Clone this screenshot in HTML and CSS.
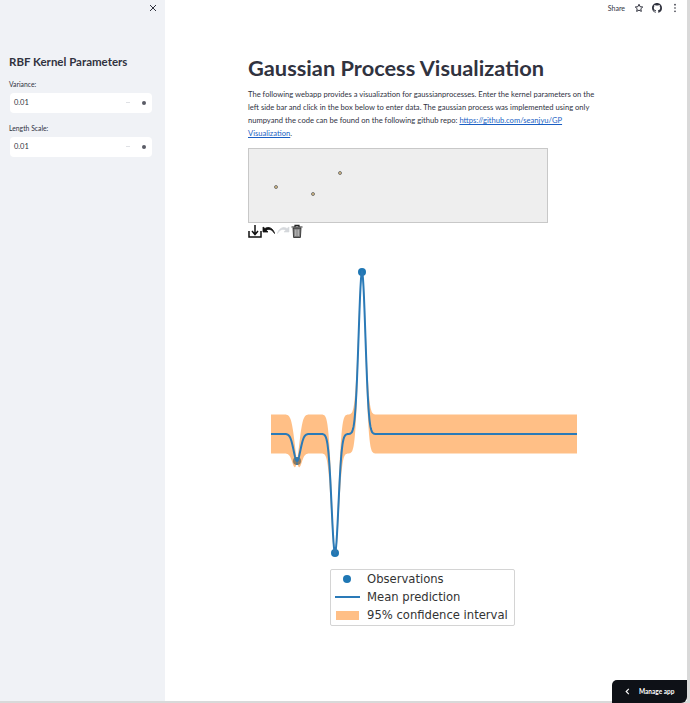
FILE: index.html
```html
<!DOCTYPE html>
<html lang="en">
<head>
    <meta charset="UTF-8">
    <meta name="viewport" content="width=device-width, initial-scale=1.0">
    <title>Gaussian Process Visualization</title>
    <link rel="stylesheet" href="styles.css">
</head>
<body>
    <div class="app">
        <aside class="sidebar">
            <div class="sidebar-top">
                <svg class="close-icon" viewBox="0 0 8 8" width="8" height="8"><path d="M1 1L7 7M7 1L1 7" stroke="#31333f" stroke-width="1" fill="none"/></svg>
            </div>
            <h2 class="sidebar-title">RBF Kernel Parameters</h2>
            <label class="field-label">Variance:</label>
            <div class="num-input">
                <span class="num-value">0.01</span>
                <span class="num-minus"></span>
                <span class="num-plus"></span>
            </div>
            <label class="field-label">Length Scale:</label>
            <div class="num-input">
                <span class="num-value">0.01</span>
                <span class="num-minus"></span>
                <span class="num-plus"></span>
            </div>
        </aside>

        <main class="main">
            <header class="topbar">
                <span class="share">Share</span>
                <svg viewBox="0 0 24 24" width="10" height="10"><path d="M12 3l2.7 5.9 6.3.7-4.7 4.3 1.3 6.3L12 17.1 6.400 20.200l1.300-6.300L3 9.600l6.300-.7z" fill="none" stroke="#31333f" stroke-width="2.400"/></svg>
                <svg viewBox="0 0 16 16" width="10" height="10"><path fill="#31333f" d="M8 0C3.580 0 0 3.580 0 8c0 3.540 2.290 6.530 5.470 7.590.4.070.55-.17.55-.38 0-.19-.01-.82-.01-1.490-2.010.37-2.530-.49-2.690-.94-.09-.23-.48-.94-.82-1.130-.28-.15-.68-.52-.01-.53.63-.01 1.080.58 1.230.82.72 1.210 1.870.87 2.330.66.070-.52.28-.87.51-1.070-1.780-.2-3.640-.89-3.640-3.950 0-.87.31-1.590.82-2.150-.08-.2-.36-1.020.08-2.120 0 0 .67-.21 2.200.82.64-.18 1.320-.27 2-.27s1.360.09 2 .27c1.530-1.040 2.200-.82 2.200-.82.44 1.100.16 1.920.08 2.120.51.56.82 1.270.82 2.150 0 3.070-1.870 3.750-3.650 3.950.29.25.54.73.54 1.480 0 1.070-.01 1.930-.01 2.200 0 .21.15.46.55.38A8.010 8.010 0 0 0 16 8c0-4.420-3.580-8-8-8z"/></svg>
                <svg class="menu-dots" viewBox="0 0 4 12" width="4" height="10"><circle cx="2" cy="2" r="1" fill="#31333f"/><circle cx="2" cy="6" r="1" fill="#31333f"/><circle cx="2" cy="10" r="1" fill="#31333f"/></svg>
            </header>

            <section class="content">
                <h1 class="page-title">Gaussian Process Visualization</h1>
                <p class="intro">The following webapp provides a visualization for gaussianprocesses. Enter the kernel parameters on the<br>
                left side bar and click in the box below to enter data. The gaussian process was implemented using only<br>
                numpyand the code can be found on the following github repo: <a href="#">https://github.com/seanjyu/GP</a><br>
                <a href="#">Visualization</a>.</p>

                <div class="canvas-box">
                    <span class="canvas-dot dot-a"></span>
                    <span class="canvas-dot dot-b"></span>
                    <span class="canvas-dot dot-c"></span>
                </div>
                <div class="canvas-tools">
                    <svg viewBox="0 0 14 14" width="14" height="14"><path d="M1 7v6h12V7M7 1v9M4 7l3 3.500L10 7" fill="none" stroke="#111" stroke-width="1.500"/></svg>
                    <svg viewBox="0 0 14 14" width="14" height="14"><path d="M1 3v5h5L4.200 6.200C7 4.500 10.500 5.500 12.500 9.500 11.500 4.500 6.500 1.800 3 4.500z" fill="#111" stroke="#111" stroke-width=".8"/></svg>
                    <svg viewBox="0 0 14 14" width="14" height="14"><path d="M13 3v5H8l1.800-1.800C7 4.500 3.500 5.500 1.500 9.500 2.500 4.500 7.500 1.800 11 4.500z" fill="#d5d8dc" stroke="#d5d8dc" stroke-width=".6"/></svg>
                    <svg viewBox="0 0 14 14" width="14" height="14"><path d="M1.500 3h11M5 3V1.300h4V3" fill="none" stroke="#222" stroke-width="1.200"/><path d="M3 4h8l-.6 9.500H3.600z" fill="#777" stroke="#222" stroke-width=".8"/><path d="M5.300 5.500v6.500M7 5.500v6.500M8.700 5.500v6.500" stroke="#ddd" stroke-width=".7"/></svg>
                </div>

                <div class="plot">
                    <svg viewBox="0 0 350 390" width="350" height="390">
                        <g id="obs" fill="#1f77b4"></g>
                        <path id="band" fill="#ff7f0e" fill-opacity="0.5"/>
                        <path id="mean" fill="none" stroke="#2a7ab8" stroke-width="2"/>
                    </svg>
                    <div class="legend">
                        <div class="legend-row"><span class="legend-key"><span class="legend-dot"></span></span>Observations</div>
                        <div class="legend-row"><span class="legend-key"><span class="legend-line"></span></span>Mean prediction</div>
                        <div class="legend-row"><span class="legend-key"><span class="legend-patch"></span></span>95% confidence interval</div>
                    </div>
                </div>
            </section>
        </main>
    </div>

    <button class="manage-app">
        <svg viewBox="0 0 8 8" width="7" height="7"><path d="M5.500 1L2.500 4l3 3" fill="none" stroke="#fff" stroke-width="1.300"/></svg>
        <span>Manage app</span>
    </button>

    <script src="plot.js"></script>
</body>
</html>
```

FILE: styles.css
```css
* {
    box-sizing: border-box;
}
html, body {
    margin: 0;
    height: 100%;
    overflow: hidden;
}
body {
    font-family: Lato, "Noto Sans", sans-serif;
    color: #31333f;
    background-color: #d9d9d9;
    width: 690px;
    height: 703px;
    position: relative;
}
.app {
    display: flex;
    width: 687px;
    height: 701px;
}

/* sidebar */
.sidebar {
    width: 165px;
    background-color: #f0f2f6;
    padding: 0 13px 0 10px;
}
.sidebar-top {
    height: 54px;
    display: flex;
    justify-content: flex-end;
    padding: 4px 0 0;
    margin-right: -5px;
}
.close-icon {
    display: block;
}
.sidebar-title {
    margin: 0 0 10px -1px;
    font-size: 11.500px;
    line-height: 15px;
    font-weight: 700;
}
.field-label {
    display: block;
    font-size: 6.800px;
    line-height: 10px;
    margin: 0 0 3.500px -1px;
}
.num-input {
    display: flex;
    align-items: center;
    height: 20px;
    background-color: #fff;
    border-radius: 4px;
    padding: 0 6px 0 4px;
    margin-bottom: 10.500px;
    font-size: 7.500px;
}
.num-value {
    flex: 1;
}
.num-minus {
    width: 4px;
    height: 1px;
    background-color: #dfe1e5;
    margin-right: 12px;
}
.num-plus {
    width: 4px;
    height: 4px;
    border-radius: 50%;
    background-color: #5a5c66;
}

/* main area */
.main {
    flex: 1;
    background-color: #fff;
}
.topbar {
    height: 15px;
    display: flex;
    justify-content: flex-end;
    align-items: center;
    gap: 8px;
    padding-right: 10px;
}
.share {
    font-size: 7px;
    margin-right: 1px;
}
.menu-dots {
    margin-left: 3px;
}
.content {
    width: 350px;
    margin-left: 83px;
    padding-top: 38px;
}
.page-title {
    margin: 0;
    font-size: 21.800px;
    line-height: 30px;
    font-weight: 700;
}
.intro {
    margin: 5px 0 8px;
    font-size: 7.600px;
    line-height: 13px;
    white-space: nowrap;
}
.intro a {
    color: #1a5fc4;
}
.canvas-box {
    position: relative;
    width: 300px;
    height: 75px;
    background-color: #eeeeee;
    border: 1px solid #c8c8c8;
}
.canvas-dot {
    position: absolute;
    width: 4px;
    height: 4px;
    border-radius: 50%;
    background-color: #e0c080;
    border: 1px solid #777;
}
.dot-a {
    left: 25px;
    top: 36px;
}
.dot-b {
    left: 62px;
    top: 43px;
}
.dot-c {
    left: 89px;
    top: 22px;
}
.canvas-tools {
    display: flex;
    height: 16px;
    margin-top: 1px;
}
.plot {
    position: relative;
    width: 350px;
    height: 390px;
}
.plot svg {
    display: block;
}
.legend {
    position: absolute;
    left: 82px;
    top: 329px;
    width: 185px;
    height: 57px;
    background-color: #fff;
    border: 1px solid #d4d4d4;
    border-radius: 2px;
    font-family: "DejaVu Sans", sans-serif;
    font-size: 11.600px;
    color: #333;
}
.legend-row {
    display: flex;
    align-items: center;
    height: 18px;
    white-space: nowrap;
}
.legend-key {
    width: 32px;
    margin-right: 4px;
    display: flex;
    justify-content: center;
    flex: none;
}
.legend-dot {
    width: 8px;
    height: 8px;
    border-radius: 50%;
    background-color: #1f77b4;
}
.legend-line {
    width: 25px;
    height: 1.500px;
    background-color: #2a7ab8;
}
.legend-patch {
    width: 23px;
    height: 9px;
    background-color: #ffbf86;
}

/* floating button */
.manage-app {
    position: absolute;
    left: 612px;
    top: 680px;
    width: 75px;
    height: 23px;
    display: flex;
    align-items: center;
    gap: 8px;
    padding: 0 0 0 12px;
    border: none;
    border-radius: 5px 0 6px 0;
    background-color: #0e1117;
    color: #fff;
    font-family: Lato, "Noto Sans", sans-serif;
    font-size: 6.500px;
    font-weight: 700;
}
```

FILE: plot.js
```js
// plot area sits at (248, 240) on the page, coordinates below are page pixels
const ox = 248, oy = 240;
const points = [[297, 461], [335, 553], [362, 272]];
const base = 434, halfBand = 19.5, len = 3.4;

function kern(x, x0) {
    return Math.exp(-((x - x0) ** 2) / (2 * len * len));
}

const top_ = [], bottom = [], line = [];
for (let x = 271; x <= 577; x += 0.5) {
    let m = base, v = 1;
    points.forEach(([px, py]) => {
        const k = kern(x, px);
        m += (py - base) * k;
        v -= k * k;
    });
    const s = halfBand * Math.sqrt(Math.max(v, 0));
    const sx = (x - ox).toFixed(1);
    line.push(sx + ' ' + (m - oy).toFixed(1));
    top_.push(sx + ' ' + (m - s - oy).toFixed(1));
    bottom.unshift(sx + ' ' + (m + s - oy).toFixed(1));
}

document.getElementById('mean').setAttribute('d', 'M' + line.join('L'));
document.getElementById('band').setAttribute('d', 'M' + top_.concat(bottom).join('L') + 'Z');

const obs = document.getElementById('obs');
points.forEach(([px, py]) => {
    const c = document.createElementNS('http://www.w3.org/2000/svg', 'circle');
    c.setAttribute('cx', px - ox);
    c.setAttribute('cy', py - oy);
    c.setAttribute('r', 4);
    obs.appendChild(c);
});
```
